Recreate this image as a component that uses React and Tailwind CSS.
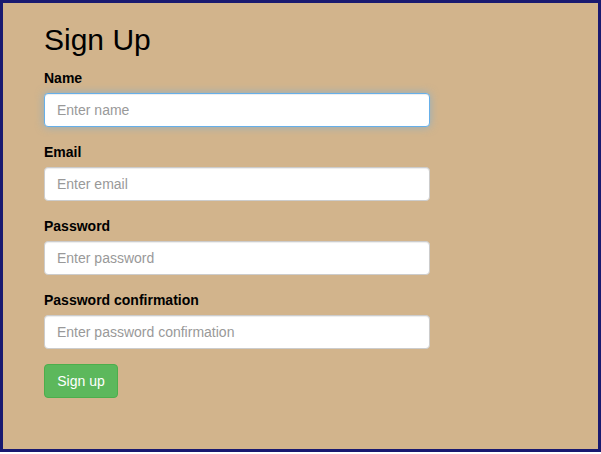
import React from "react";

const fields = [
  { id: "name", label: "Name", placeholder: "Enter name", type: "text", focused: true },
  { id: "email", label: "Email", placeholder: "Enter email", type: "email" },
  { id: "password", label: "Password", placeholder: "Enter password", type: "password" },
  {
    id: "password_confirmation",
    label: "Password confirmation",
    placeholder: "Enter password confirmation",
    type: "password",
  },
];

const Field = ({ field }) => (
  <div className="mb-[15px]">
    <label htmlFor={field.id} className="block mb-[5px] text-[14px] leading-[20px] font-bold text-black">
      {field.label}
    </label>
    <input
      id={field.id}
      type={field.type}
      placeholder={field.placeholder}
      className={
        field.focused
          ? "block w-[386px] h-[34px] px-[12px] py-[6px] text-[14px] bg-white rounded-[4px] border border-[#66afe9] outline-none placeholder:text-[#999] shadow-[inset_0_1px_1px_rgba(0,0,0,0.075),0_0_8px_rgba(102,175,233,0.6)]"
          : "block w-[386px] h-[34px] px-[12px] py-[6px] text-[14px] bg-white rounded-[4px] border border-[#ccc] outline-none placeholder:text-[#999] shadow-[inset_0_1px_1px_rgba(0,0,0,0.075)]"
      }
    />
  </div>
);

export default function App() {
  return (
    <div
      className="w-[601px] h-[452px] bg-[#d2b48c] border-[3px] border-[#191970] pl-[41px] pt-[19px]"
      style={{ fontFamily: '"Liberation Sans", Arial, sans-serif' }}
    >
      <h1 className="text-[30px] leading-[36px] font-normal text-black mb-[10px]">Sign Up</h1>
      <form onSubmit={(e) => e.preventDefault()}>
        {fields.map((f) => (
          <Field field={f} key={f.id} />
        ))}
        <button
          type="submit"
          className="h-[34px] w-[74px] text-[14px] text-white bg-[#5cb85c] border border-[#4cae4c] rounded-[4px]"
        >
          Sign up
        </button>
      </form>
    </div>
  );
}
